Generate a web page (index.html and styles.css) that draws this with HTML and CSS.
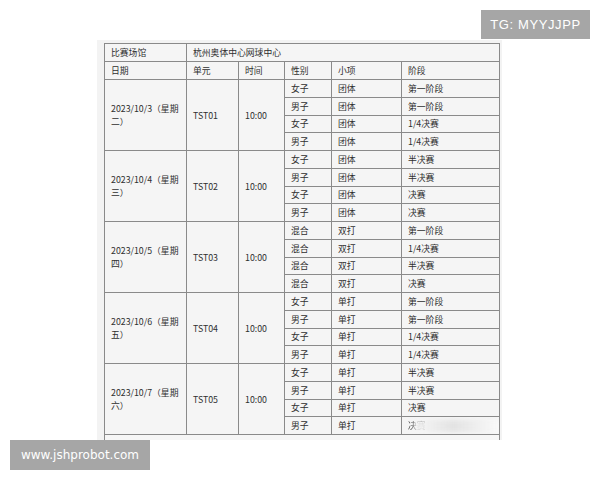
FILE: index.html
```html
<!DOCTYPE html>
<html lang="zh">
<head>
<meta charset="utf-8">
<title>杭州奥体中心网球中心 赛程</title>
<link rel="stylesheet" href="styles.css">
</head>
<body>
<div class="page">
  <div class="tag tag-tg">TG: MYYJJPP</div>
  <div class="panel">
    <table class="sched">
      <colgroup>
        <col class="c1"><col class="c2"><col class="c3"><col class="c4"><col class="c5"><col class="c6">
      </colgroup>
      <tr class="hrow"><td>比赛场馆</td><td colspan="5">杭州奥体中心网球中心</td></tr>
      <tr class="hrow"><td>日期</td><td>单元</td><td>时间</td><td>性别</td><td>小项</td><td>阶段</td></tr>

      <tr><td rowspan="4" class="date">2023/10/3（星期<br>二）</td><td rowspan="4">TST01</td><td rowspan="4">10:00</td><td>女子</td><td>团体</td><td>第一阶段</td></tr>
      <tr><td>男子</td><td>团体</td><td>第一阶段</td></tr>
      <tr><td>女子</td><td>团体</td><td>1/4决赛</td></tr>
      <tr><td>男子</td><td>团体</td><td>1/4决赛</td></tr>

      <tr><td rowspan="4" class="date">2023/10/4（星期<br>三）</td><td rowspan="4">TST02</td><td rowspan="4">10:00</td><td>女子</td><td>团体</td><td>半决赛</td></tr>
      <tr><td>男子</td><td>团体</td><td>半决赛</td></tr>
      <tr><td>女子</td><td>团体</td><td>决赛</td></tr>
      <tr><td>男子</td><td>团体</td><td>决赛</td></tr>

      <tr><td rowspan="4" class="date">2023/10/5（星期<br>四）</td><td rowspan="4">TST03</td><td rowspan="4">10:00</td><td>混合</td><td>双打</td><td>第一阶段</td></tr>
      <tr><td>混合</td><td>双打</td><td>1/4决赛</td></tr>
      <tr><td>混合</td><td>双打</td><td>半决赛</td></tr>
      <tr><td>混合</td><td>双打</td><td>决赛</td></tr>

      <tr><td rowspan="4" class="date">2023/10/6（星期<br>五）</td><td rowspan="4">TST04</td><td rowspan="4">10:00</td><td>女子</td><td>单打</td><td>第一阶段</td></tr>
      <tr><td>男子</td><td>单打</td><td>第一阶段</td></tr>
      <tr><td>女子</td><td>单打</td><td>1/4决赛</td></tr>
      <tr><td>男子</td><td>单打</td><td>1/4决赛</td></tr>

      <tr><td rowspan="4" class="date">2023/10/7（星期<br>六）</td><td rowspan="4">TST05</td><td rowspan="4">10:00</td><td>女子</td><td>单打</td><td>半决赛</td></tr>
      <tr><td>男子</td><td>单打</td><td>半决赛</td></tr>
      <tr><td>女子</td><td>单打</td><td>决赛</td></tr>
      <tr><td>男子</td><td>单打</td><td class="smear"><span>决赛</span></td></tr>
      <tr class="cut"><td colspan="6"></td></tr>
    </table>
  </div>
  <div class="tag tag-www">www.jshprobot.com</div>
</div>
</body>
</html>
```

FILE: styles.css
```css
html, body {
  margin: 0;
  padding: 0;
  background: #ffffff;
}

.page {
  position: relative;
  width: 600px;
  height: 480px;
  overflow: hidden;
}

.tag {
  position: absolute;
  background: #a6a6a6;
  color: #ffffff;
  display: flex;
  align-items: center;
  justify-content: center;
}

.tag-tg {
  top: 10px;
  left: 481px;
  width: 109px;
  height: 29px;
  font-family: "Liberation Sans", Arial, sans-serif;
  font-size: 13px;
  letter-spacing: 0.6px;
}

.tag-www {
  top: 440px;
  left: 10px;
  width: 140px;
  height: 30px;
  font-family: "DejaVu Sans", sans-serif;
  font-size: 12px;
}

.panel {
  margin: 40px 0 0 97px;
  width: 405px;
  height: 400px;
  background: #f3f3f3;
  overflow: hidden;
  padding: 3px 0 0 7px;
  box-sizing: border-box;
}

.sched {
  border-collapse: collapse;
  table-layout: fixed;
  width: 395px;
  background: #f5f5f5;
  font-family: "Noto Sans CJK SC", "Noto Sans", sans-serif;
  font-size: 8.8px;
  color: #2f2f2f;
}

.c1 { width: 82px; }
.c2 { width: 52px; }
.c3 { width: 46px; }
.c4 { width: 47px; }
.c5 { width: 70px; }
.c6 { width: 98px; }

.sched td {
  border: 1px solid #8a8a8a;
  padding: 0 4px 0 6px;
  height: 16.75px;
  line-height: 11px;
  vertical-align: middle;
  white-space: nowrap;
  overflow: hidden;
}

.sched .hrow td {
  height: 17px;
}

.sched td.date {
  white-space: normal;
  line-height: 13px;
}

.smear {
  position: relative;
}

.smear span {
  filter: blur(0.4px);
}

.smear::after {
  content: "";
  position: absolute;
  left: 12px;
  right: -2px;
  top: 3px;
  bottom: 2px;
  background: linear-gradient(90deg, rgba(246,246,246,0.95) 0%, rgba(225,225,225,0.9) 45%, rgba(250,250,250,0.95) 100%);
  filter: blur(2px);
}

.sched .cut td {
  height: 20px;
  background: #f6f6f6;
}
```
